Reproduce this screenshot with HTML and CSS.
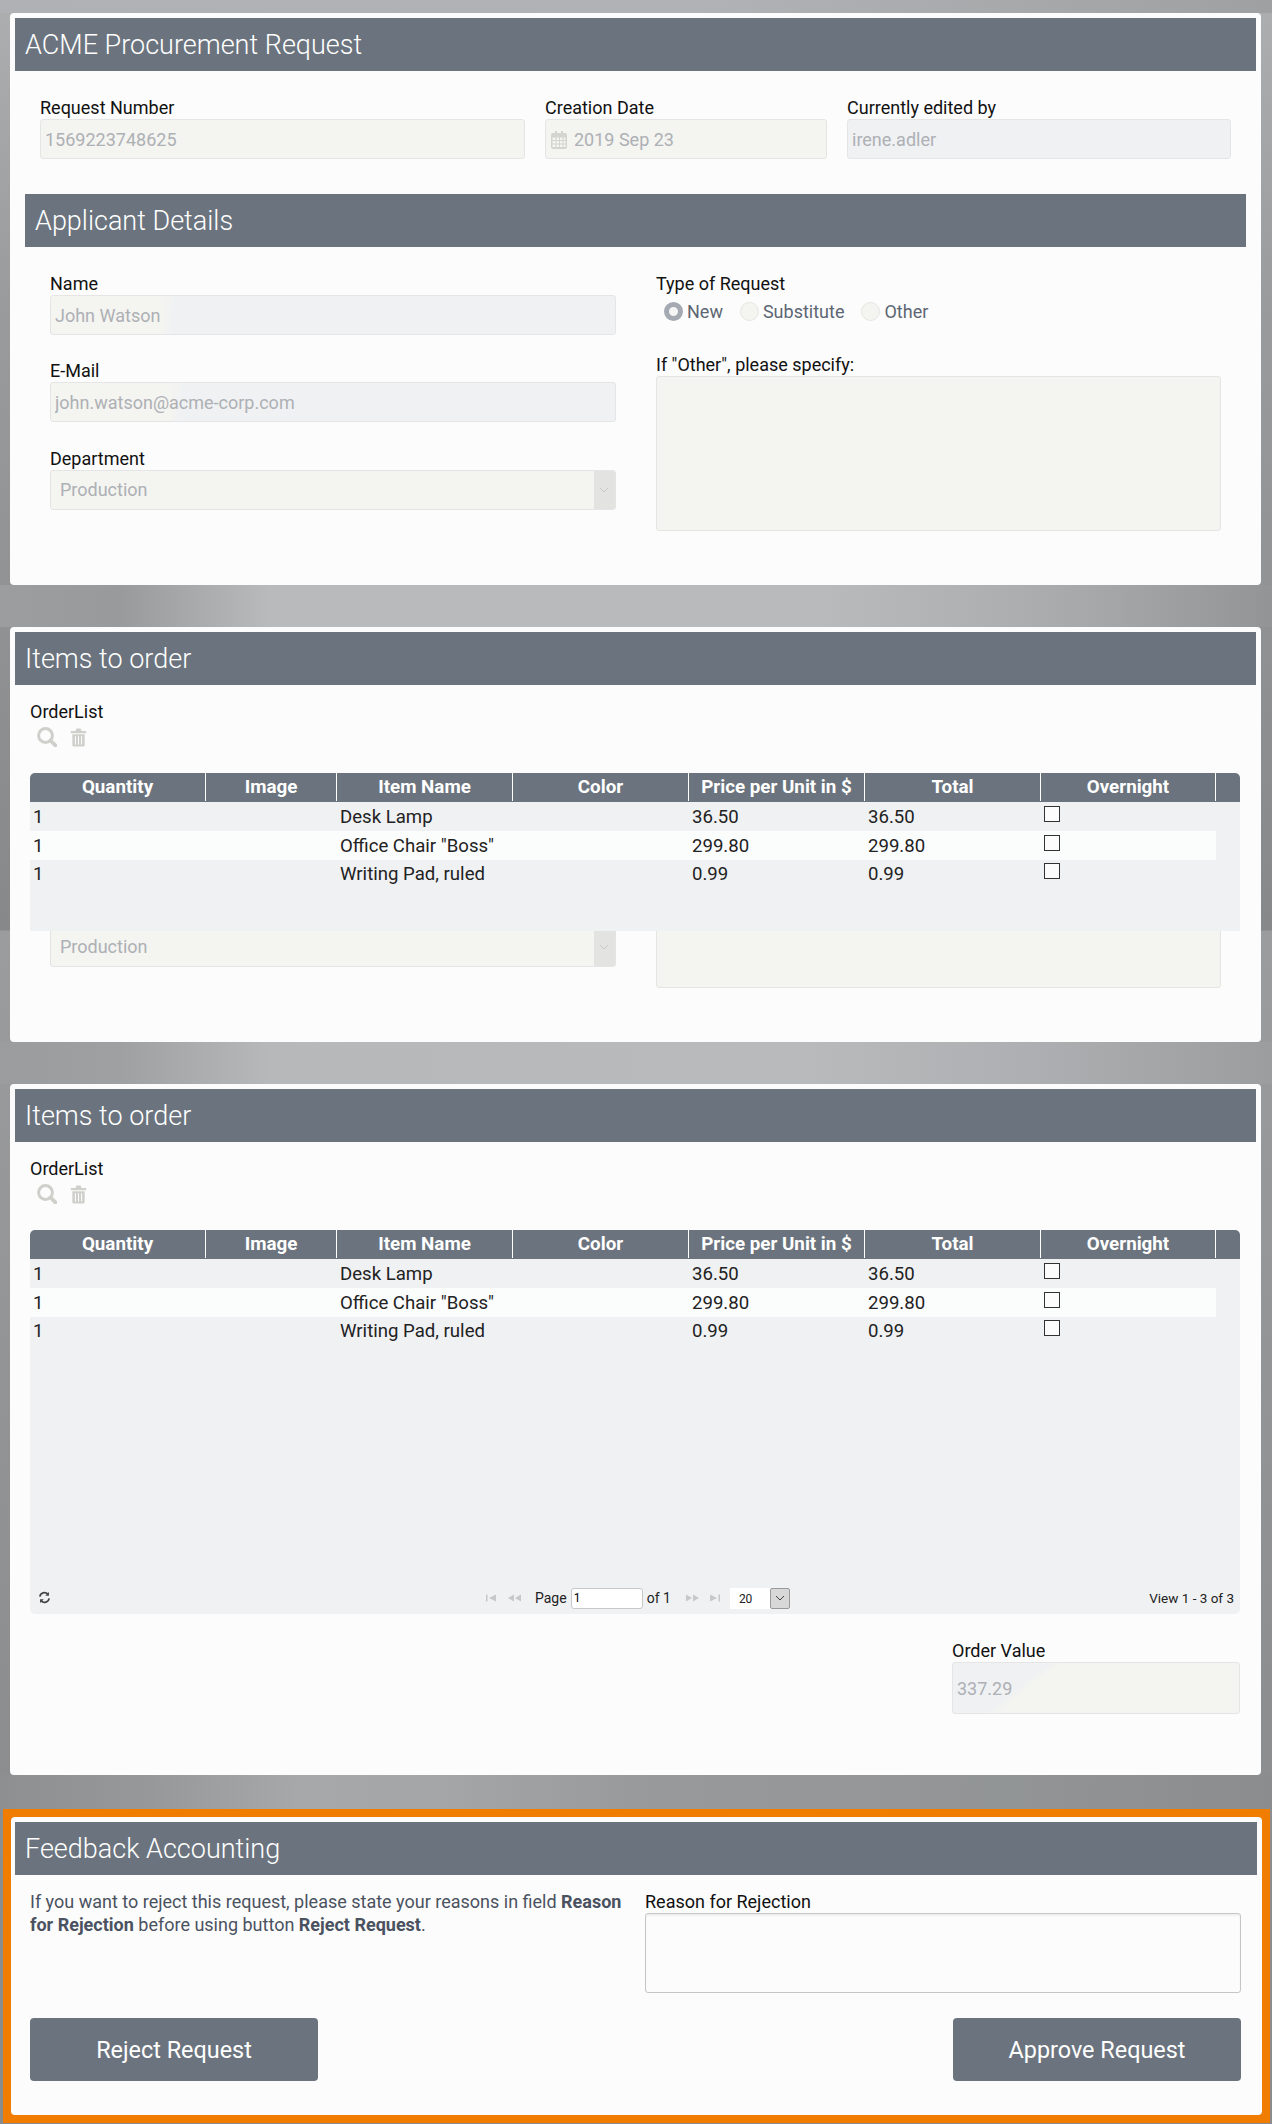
FILE: index.html
```html
<!DOCTYPE html>
<html>
<head>
    <meta charset="UTF-8">
    <title>ACME Procurement Request</title>
    <link rel="stylesheet" href="styles.css">
</head>
<body>
    <div class="page">
        <div class="card card-request">
            <h1 class="bar">ACME Procurement Request</h1>
            <div class="request-fields">
                <div class="field">
                    <label>Request Number</label>
                    <input class="input cream" type="text" value="1569223748625" disabled>
                </div>
                <div class="field">
                    <label>Creation Date</label>
                    <div class="input cream date-input">
                        <svg class="calendar" viewBox="0 0 18 19"><path d="M3 3h2V1h2v2h4V1h2v2h2a2 2 0 0 1 2 2v12a2 2 0 0 1-2 2H3a2 2 0 0 1-2-2V5a2 2 0 0 1 2-2zM2.500 7.500v2.500h3V7.500zM6.500 7.500v2.500h2.500V7.500zM10 7.500v2.500h2.500V7.500zM13.500 7.500v2.500h2V7.500zM2.500 11v2.500h3V11zM6.500 11v2.500h2.500V11zM10 11v2.500h2.500V11zM13.500 11v2.500h2V11zM2.500 14.500v2.500h3v-2.500zM6.500 14.500v2.500h2.500v-2.500zM10 14.500v2.500h2.500v-2.500zM13.500 14.500v2.500h2v-2.500z" fill-rule="evenodd"/></svg>
                        <span>2019 Sep 23</span>
                    </div>
                </div>
                <div class="field">
                    <label>Currently edited by</label>
                    <input class="input grey" type="text" value="irene.adler" disabled>
                </div>
            </div>

            <h2 class="bar sub-bar">Applicant Details</h2>
            <div class="applicant">
                <div class="applicant-left">
                    <div class="field">
                        <label>Name</label>
                        <input class="input fade-name" type="text" value="John Watson" disabled>
                    </div>
                    <div class="field field-mail">
                        <label>E-Mail</label>
                        <input class="input fade-mail" type="text" value="john.watson@acme-corp.com" disabled>
                    </div>
                    <div class="field field-department">
                        <label>Department</label>
                        <div class="select-box">
                            <span class="select-text">Production</span>
                            <span class="select-arrow"><svg viewBox="0 0 10 6"><path d="M1 1l4 4 4-4"/></svg></span>
                        </div>
                    </div>
                </div>
                <div class="applicant-right">
                    <label>Type of Request</label>
                    <div class="radios">
                        <span class="radio checked"></span><span class="radio-text">New</span>
                        <span class="radio"></span><span class="radio-text">Substitute</span>
                        <span class="radio"></span><span class="radio-text">Other</span>
                    </div>
                    <label class="other-label">If "Other", please specify:</label>
                    <textarea class="input cream other-text" disabled></textarea>
                </div>
            </div>
        </div>

        <div class="card card-items-short">
            <h2 class="bar">Items to order</h2>
            <div class="order-section">
                <label>OrderList</label>
                <div class="tools">
                    <svg class="tool-search" viewBox="0 0 20 20"><circle cx="8.500" cy="8.500" r="6.900"/><path d="M13.500 13.500l4.900 4.900"/></svg>
                    <svg class="tool-trash" viewBox="0.500 0.500 16 18.500"><path d="M1 3.500h4.500l1-2.500h4l1 2.500H16v2H1zM2.500 6.500h12V17a1.500 1.500 0 0 1-1.500 1.500H4A1.500 1.500 0 0 1 2.500 17zM5 8.500v8h1v-8zM8 8.500v8h1v-8zM11 8.500v8h1v-8z" fill-rule="evenodd"/></svg>
                </div>
                <div class="grid grid-short">
                    <div class="grid-head">
                        <div>Quantity</div><div>Image</div><div>Item Name</div><div>Color</div><div>Price per Unit in $</div><div>Total</div><div>Overnight</div><div></div>
                    </div>
                    <div class="grid-row">
                        <div>1</div><div></div><div>Desk Lamp</div><div></div><div>36.50</div><div>36.50</div><div><input class="check" type="checkbox"></div>
                    </div>
                    <div class="grid-row row-light">
                        <div>1</div><div></div><div>Office Chair "Boss"</div><div></div><div>299.80</div><div>299.80</div><div><input class="check" type="checkbox"></div>
                    </div>
                    <div class="grid-row row-last">
                        <div>1</div><div></div><div>Writing Pad, ruled</div><div></div><div>0.99</div><div>0.99</div><div><input class="check" type="checkbox"></div>
                    </div>
                </div>
                <!-- stale part of the applicant card, left behind the grid -->
                <div class="behind-grid">
                    <div class="select-box">
                        <span class="select-text">Production</span>
                        <span class="select-arrow"><svg viewBox="0 0 10 6"><path d="M1 1l4 4 4-4"/></svg></span>
                    </div>
                    <div class="input cream behind-text"></div>
                </div>
            </div>
        </div>

        <div class="card card-items-full">
            <h2 class="bar">Items to order</h2>
            <div class="order-section">
                <label>OrderList</label>
                <div class="tools">
                    <svg class="tool-search" viewBox="0 0 20 20"><circle cx="8.500" cy="8.500" r="6.900"/><path d="M13.500 13.500l4.900 4.900"/></svg>
                    <svg class="tool-trash" viewBox="0.500 0.500 16 18.500"><path d="M1 3.500h4.500l1-2.500h4l1 2.500H16v2H1zM2.500 6.500h12V17a1.500 1.500 0 0 1-1.500 1.500H4A1.500 1.500 0 0 1 2.500 17zM5 8.500v8h1v-8zM8 8.500v8h1v-8zM11 8.500v8h1v-8z" fill-rule="evenodd"/></svg>
                </div>
                <div class="grid grid-full">
                    <div class="grid-head">
                        <div>Quantity</div><div>Image</div><div>Item Name</div><div>Color</div><div>Price per Unit in $</div><div>Total</div><div>Overnight</div><div></div>
                    </div>
                    <div class="grid-row">
                        <div>1</div><div></div><div>Desk Lamp</div><div></div><div>36.50</div><div>36.50</div><div><input class="check" type="checkbox"></div>
                    </div>
                    <div class="grid-row row-light">
                        <div>1</div><div></div><div>Office Chair "Boss"</div><div></div><div>299.80</div><div>299.80</div><div><input class="check" type="checkbox"></div>
                    </div>
                    <div class="grid-row row-last">
                        <div>1</div><div></div><div>Writing Pad, ruled</div><div></div><div>0.99</div><div>0.99</div><div><input class="check" type="checkbox"></div>
                    </div>
                    <div class="grid-fill"></div>
                    <div class="pager">
                        <svg class="pager-reload" viewBox="0 0 14 14"><path d="M2 6a5 5 0 0 1 8.600-2.600M12 8a5 5 0 0 1-8.600 2.600"/><path class="head" d="M11.800 1v4h-4zM2.200 13V9h4z"/></svg>
                        <div class="pager-center">
                            <svg class="pager-icon" viewBox="0 0 37 12"><path d="M1 2.500h1.500v7H1zM11 2.500v7L4 6zM29 2.500v7L23 6zM36 2.500v7L30 6z"/></svg>
                            <span class="pager-page">Page</span>
                            <input class="pager-input" type="text" value="1">
                            <span class="pager-of">of 1</span>
                            <svg class="pager-icon icon-next" viewBox="0 0 37 12"><path d="M1 2.500v7L7 6zM8 2.500v7L14 6zM25 2.500v7L32 6zM33.500 2.500H35v7h-1.500z"/></svg>
                            <div class="pager-select">
                                <span>20</span>
                                <span class="pager-arrow"><svg viewBox="0 0 10 6"><path d="M1 1l4 4 4-4"/></svg></span>
                            </div>
                        </div>
                        <span class="pager-view">View 1 - 3 of 3</span>
                    </div>
                </div>
                <div class="order-value">
                    <label>Order Value</label>
                    <input class="input fade-value" type="text" value="337.29" disabled>
                </div>
            </div>
        </div>

        <div class="highlight">
            <div class="card card-feedback">
                <h2 class="bar">Feedback Accounting</h2>
                <div class="feedback">
                    <p class="hint">If you want to reject this request, please state your reasons in field <b>Reason for Rejection</b> before using button <b>Reject Request</b>.</p>
                    <div class="reason">
                        <label>Reason for Rejection</label>
                        <textarea class="reason-text"></textarea>
                    </div>
                </div>
                <div class="buttons">
                    <button class="action">Reject Request</button>
                    <button class="action">Approve Request</button>
                </div>
            </div>
        </div>
    </div>
</body>
</html>
```

FILE: styles.css
```css
* {
    box-sizing: border-box;
}
body {
    margin: 0;
    font-family: Roboto, "Liberation Sans", sans-serif;
    font-size: 18px;
    line-height: 23px;
    color: #4a5260;
    background-color: #8d8e90;
}
.page {
    height: 2124px;
    padding: 13px 11px 0 10px;
    overflow: hidden;
    background-repeat: no-repeat;
    background-image:
        linear-gradient(to right, #b0b1b4 0, #b1b2b5 700px, #a8a9ab 1000px, #9fa0a2 1272px),
        linear-gradient(to right, #9c9d9f 0, #999a9c 120px, #b8babb 270px, #b9babb 820px, #aeafb1 1000px, #a6a7a8 1100px, #939495 1272px),
        linear-gradient(to right, #9b9c9d 0, #9fa0a1 120px, #b6b8b9 270px, #b9babb 800px, #aeafb2 1030px, #a5a6a7 1150px, #9c9d9e 1272px),
        linear-gradient(to right, #8e8f90 0, #97989a 150px, #a7a8a9 300px, #a4a5a6 450px, #98999b 650px, #929596 1000px, #8b8c8d 1272px),
        linear-gradient(to bottom, #adaeb0 0, #9a9b9d 300px, #87888a 930px, #9b9c9e 931px, #8d8e90 1700px, #8a8b8d 2124px);
    background-position: 0 0, 0 585px, 0 1042px, 0 1775px, 0 0;
    background-size: 100% 13px, 100% 42px, 100% 42px, 100% 34px, 100% 100%;
}
.card {
    background-color: #fcfcfc;
    border-radius: 4px;
    padding: 5px;
}
label {
    display: block;
    color: #111;
    height: 23px;
}
.bar {
    height: 53px;
    margin: 0;
    padding-left: 10px;
    background-color: #6b747e;
    color: #fff;
    font-size: 27px;
    line-height: 55px;
    font-weight: 300;
}
.input {
    display: block;
    width: 100%;
    height: 40px;
    margin: 0;
    padding: 0 4px;
    border: 1px solid #e4e5e4;
    border-radius: 3px;
    font: inherit;
    font-size: 18px;
    color: #adb0b5;
    -webkit-text-fill-color: #adb0b5;
    opacity: 1;
    outline: none;
    resize: none;
}
.cream {
    background-color: #f4f4f0;
}
.grey {
    background-color: #f0f1f3;
}
.fade-name {
    background: linear-gradient(94deg, #f4f4f0 0 112px, #f0f1f3 124px);
}
.fade-mail {
    background: linear-gradient(94deg, #f4f4f0 0 120px, #f0f1f3 132px);
}
.fade-value {
    height: 52px;
    background: linear-gradient(142deg, #f0f1f3 0 60px, #f4f4f0 66px);
}

/* first card */
.card-request {
    height: 572px;
}
.request-fields {
    display: grid;
    grid-template-columns: 485px 282px 384px;
    column-gap: 20px;
    padding: 25px 0 0 25px;
}
.date-input {
    display: flex;
    align-items: center;
    gap: 6px;
    padding-left: 4px;
}
.calendar {
    width: 18px;
    height: 19px;
    fill: #d4d4d1;
}
.sub-bar {
    margin: 35px 10px 0;
}
.applicant {
    display: grid;
    grid-template-columns: 565.5px 565px;
    column-gap: 40.5px;
    padding: 25px 0 0 35px;
}
.applicant-left {
    display: flex;
    flex-direction: column;
}
.field-mail {
    margin-top: 24px;
}
.field-department {
    margin-top: 25px;
}
.select-box {
    display: flex;
    height: 40px;
    border: 1px solid #e4e5e4;
    border-radius: 3px;
    background-color: #f4f4f0;
    overflow: hidden;
}
.select-text {
    flex: 1;
    padding-left: 9px;
    font-size: 18px;
    line-height: 37px;
    color: #adb0b5;
}
.select-arrow {
    display: flex;
    align-items: center;
    justify-content: center;
    width: 21px;
    background-color: #e3e3e2;
}
.select-arrow svg {
    width: 10px;
    height: 6px;
    fill: none;
    stroke: #c8c8c8;
}
.radios {
    display: flex;
    align-items: center;
    height: 25px;
    margin: 4px 0 0 8px;
}
.radio {
    width: 19px;
    height: 19px;
    border-radius: 50%;
    border: 1px solid #e6e6e2;
    background-color: #f4f4f0;
}
.radio.checked {
    border: 5px solid #a5a9b1;
    background-color: #f5f5f5;
}
.radio-text {
    margin: 0 17px 0 4px;
    font-size: 18px;
    color: #5c6672;
}
.other-label {
    margin-top: 29px;
}
.other-text {
    height: 155px;
}

/* order grids */
.order-section {
    padding: 15px 0 0 15px;
    width: 1225px;
}
.tools {
    display: flex;
    align-items: center;
    height: 26px;
    margin: 1px 0 23px 7px;
    gap: 13px;
}
.tool-search {
    width: 20px;
    height: 20px;
    fill: none;
    stroke: #cfcfcb;
    stroke-width: 3;
}
.tool-search path {
    stroke-width: 3.800;
    stroke-linecap: round;
}
.tool-trash {
    width: 17px;
    height: 19px;
    fill: #cfcfcb;
}
.grid {
    position: relative;
    z-index: 1;
    display: flex;
    flex-direction: column;
    width: 1210px;
    background-color: #f0f1f3;
    border-radius: 5px 5px 0 0;
    overflow: hidden;
}
.grid-short {
    height: 158px;
}
.grid-full {
    height: 384px;
    border-radius: 5px;
}
.grid-fill {
    flex: 1;
}
.grid-head {
    display: grid;
    grid-template-columns: 176px 131px repeat(4, 176px) 175px 24px;
    flex: none;
    height: 29px;
    background-color: #6b747e;
    color: #fff;
    font-weight: 700;
    font-size: 18.8px;
    line-height: 28px;
    text-align: center;
}
.grid-head div {
    border-right: 1px solid #fff;
    height: 28px;
}
.grid-head div:last-child {
    border-right: none;
}
.grid-row {
    display: grid;
    grid-template-columns: 176px 131px repeat(4, 176px) 175px;
    flex: none;
    width: 1186px;
    height: 29px;
    line-height: 31px;
    font-size: 18.6px;
    color: #222;
}
.grid-row div {
    padding-left: 3px;
}
.row-light {
    background-color: #fbfcfc;
}
.row-last {
    height: 28px;
    line-height: 29px;
}
.check {
    appearance: none;
    display: block;
    width: 16px;
    height: 16px;
    margin: 4px 0 0;
    border: 1px solid #333;
    background-color: #fcfcfc;
}
.row-last .check {
    margin-top: 3px;
}
.behind-grid {
    display: grid;
    grid-template-columns: 565.5px 565px;
    column-gap: 40.5px;
    margin: -4px 0 0 20px;
    padding-bottom: 53px;
}
.behind-text {
    height: 61px;
}

/* pager */
.pager {
    display: flex;
    flex: none;
    align-items: center;
    height: 32px;
    font-size: 14px;
    color: #222;
}
.pager-reload {
    width: 13px;
    height: 13px;
    margin: 0 0 2px 8px;
    fill: none;
    stroke: #444;
    stroke-width: 1.800;
}
.pager-reload .head {
    fill: #444;
    stroke: none;
}
.pager-center {
    display: flex;
    align-items: center;
    margin-left: 434px;
}
.pager-icon {
    width: 37px;
    height: 12px;
    fill: #c8c8c8;
}
.icon-next {
    margin: 0 8px 0 14px;
}
.pager-page {
    margin: 0 4px 0 13px;
}
.pager-input {
    width: 72px;
    height: 21px;
    padding: 0 2px;
    border: 1px solid #c8c8c8;
    border-radius: 3px;
    font: inherit;
    font-size: 12px;
    background-color: #fff;
}
.pager-of {
    margin-left: 4px;
}
.pager-select {
    display: flex;
    width: 60px;
    height: 21px;
    padding-left: 9px;
    font-size: 12px;
    line-height: 22px;
    background-color: #fff;
    justify-content: space-between;
}
.pager-arrow {
    display: flex;
    align-items: center;
    justify-content: center;
    width: 20px;
    border: 1px solid #999;
    border-radius: 2px;
    background-color: #d8d8d8;
}
.pager-arrow svg {
    width: 10px;
    height: 6px;
    fill: none;
    stroke: #444;
}
.pager-view {
    margin-left: auto;
    margin-right: 6px;
    font-size: 13.500px;
}
.order-value {
    width: 288px;
    margin: 25px 0 0 auto;
}
.card-items-short,
.card-items-full {
    margin-top: 42px;
}
.card-items-short {
    height: 415px;
}
.card-items-full {
    height: 691px;
}

/* feedback card */
.highlight {
    width: 1266.500px;
    height: 314px;
    margin: 34px 0 0 -7px;
    padding: 8px;
    background-color: #f07d00;
}
.card-feedback {
    height: 298px;
    padding-left: 4px;
}
.feedback {
    display: grid;
    grid-template-columns: 595px 596px;
    column-gap: 20px;
    padding: 15px 0 0 15px;
}
.hint {
    margin: 0;
    color: #4a5260;
}
.reason-text {
    display: block;
    width: 100%;
    height: 80px;
    border: 1px solid #c6c6c6;
    border-radius: 3px;
    background-color: #fcfcfc;
    box-shadow: inset 0 2px 2px #efefef;
    outline: none;
    resize: none;
}
.buttons {
    display: flex;
    justify-content: space-between;
    width: 1211px;
    margin: 25px 0 0 15px;
}
.action {
    width: 288px;
    height: 63px;
    padding-top: 2px;
    border: none;
    border-radius: 4px;
    background-color: #6b747e;
    color: #fff;
    font: inherit;
    font-size: 23.4px;
}
```
